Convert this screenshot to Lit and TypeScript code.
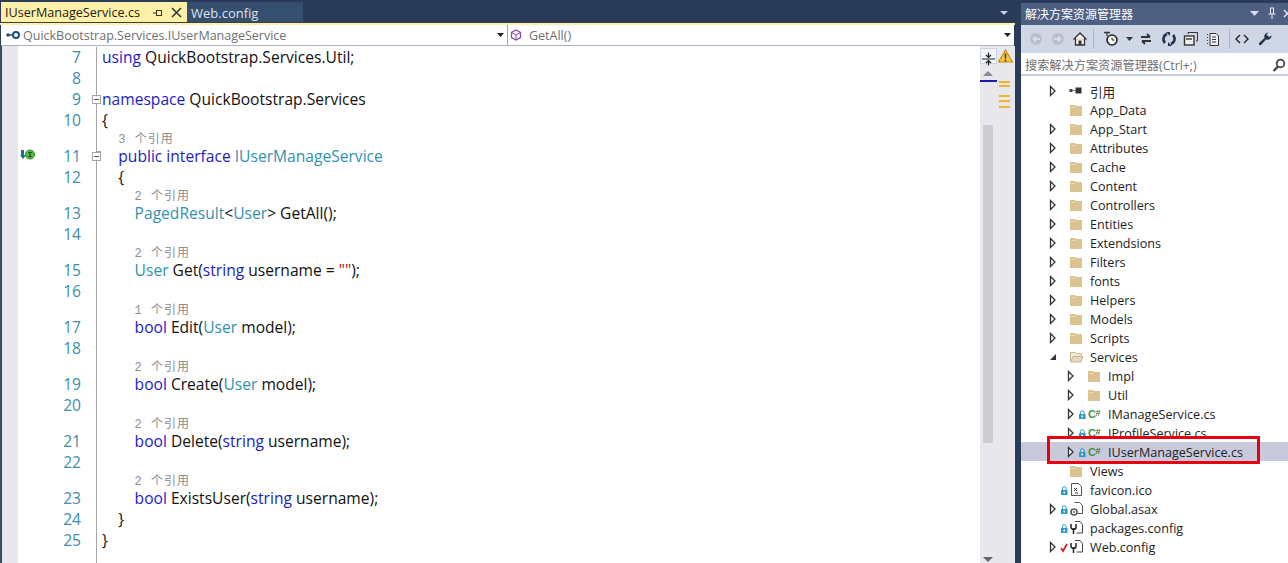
import { LitElement, html, css, svg } from "lit";
import { customElement } from "lit/decorators.js";

type Tok = [string, string?];
const K = "k", T = "t", S = "s";
type Row = { n: number; toks: Tok[]; lens?: string; indent: number; box?: boolean; start?: boolean; tick?: boolean; noLine?: boolean; mark?: boolean };
const rows: Row[] = [
  { n: 7, indent: 0, tick: true, toks: [["using", K], [" QuickBootstrap.Services.Util;"]] },
  { n: 8, indent: 0, noLine: true, toks: [] },
  { n: 9, indent: 0, box: true, start: true, toks: [["namespace", K], [" QuickBootstrap.Services"]] },
  { n: 10, indent: 0, toks: [["{"]] },
  { n: 11, indent: 1, box: true, mark: true, lens: "3 个引用", toks: [["public", K], [" "], ["interface", K], [" "], ["IUserManageService", T]] },
  { n: 12, indent: 1, toks: [["{"]] },
  { n: 13, indent: 2, lens: "2 个引用", toks: [["PagedResult", T], ["<"], ["User", T], ["> GetAll();"]] },
  { n: 14, indent: 0, toks: [] },
  { n: 15, indent: 2, lens: "2 个引用", toks: [["User", T], [" Get("], ["string", K], [" username = "], ['""', S], [");"]] },
  { n: 16, indent: 0, toks: [] },
  { n: 17, indent: 2, lens: "1 个引用", toks: [["bool", K], [" Edit("], ["User", T], [" model);"]] },
  { n: 18, indent: 0, toks: [] },
  { n: 19, indent: 2, lens: "2 个引用", toks: [["bool", K], [" Create("], ["User", T], [" model);"]] },
  { n: 20, indent: 0, toks: [] },
  { n: 21, indent: 2, lens: "2 个引用", toks: [["bool", K], [" Delete("], ["string", K], [" username);"]] },
  { n: 22, indent: 0, toks: [] },
  { n: 23, indent: 2, lens: "2 个引用", toks: [["bool", K], [" ExistsUser("], ["string", K], [" username);"]] },
  { n: 24, indent: 1, tick: true, toks: [["}"]] },
  { n: 25, indent: 0, tick: true, toks: [["}"]] },
];

type Node = { label: string; lv: number; exp?: "c" | "o"; icon: string; state?: string; sel?: boolean };
const F = "folder";
const tree: Node[] = [
  { label: "引用", lv: 0, exp: "c", icon: "ref" },
  { label: "App_Data", lv: 0, icon: F },
  ...["App_Start", "Attributes", "Cache", "Content", "Controllers", "Entities", "Extendsions", "Filters", "fonts", "Helpers", "Models", "Scripts"].map((label) => ({ label, lv: 0, exp: "c" as const, icon: F })),
  { label: "Services", lv: 0, exp: "o", icon: "open" },
  { label: "Impl", lv: 1, exp: "c", icon: F },
  { label: "Util", lv: 1, exp: "c", icon: F },
  { label: "IManageService.cs", lv: 1, exp: "c", icon: "cs", state: "lock" },
  { label: "IProfileService.cs", lv: 1, exp: "c", icon: "cs", state: "lock" },
  { label: "IUserManageService.cs", lv: 1, exp: "c", icon: "cs", state: "lock", sel: true },
  { label: "Views", lv: 0, icon: F },
  { label: "favicon.ico", lv: 0, icon: "ico", state: "lock" },
  { label: "Global.asax", lv: 0, exp: "c", icon: "asax", state: "lock" },
  { label: "packages.config", lv: 0, icon: "cfg", state: "lock" },
  { label: "Web.config", lv: 0, exp: "c", icon: "cfg", state: "check" },
];

const treeIcon = (k: string) => {
  switch (k) {
    case F:
      return svg`<path d="M1 3h5l1 1h6v10H1z" fill="#dcc291"/><path d="M2 5h4v1H2z" fill="#ebdcbf"/>`;
    case "open":
      return svg`<path d="M1.500 13V3.500h5l1 1h5V7" fill="#f4ead8" stroke="#c8b591"/><path d="M1.500 13L4 7.500h10L12 13z" fill="#e6d8bd" stroke="#c8b591"/>`;
    case "ref":
      return svg`<rect x="0.500" y="6" width="3" height="3" fill="#444"/><path d="M3.500 7.500h3" stroke="#777"/><rect x="6.500" y="4.500" width="6" height="6" fill="#333"/>`;
    case "cs":
      return svg`<text x="1" y="11.500" font-family="Liberation Sans, sans-serif" font-size="11" font-weight="700" fill="#3f9150">C</text><text x="8.500" y="9.500" font-family="Liberation Sans, sans-serif" font-size="9" font-weight="700" fill="#2f7d42">#</text>`;
    case "ico":
      return svg`<path d="M2.500 1.500h7l3 3v9h-10z" fill="#fff" stroke="#555"/><path d="M5 6l3 3M8 6l-3 3M6 11h3" stroke="#333"/>`;
    case "asax":
      return svg`<path d="M5.500 1.500h5l3 3v8h-5" fill="#fff" stroke="#555"/><circle cx="5" cy="11" r="3" fill="none" stroke="#555" stroke-width="1.600"/><circle cx="5" cy="11" r="1" fill="#555"/>`;
    default:
      return svg`<path d="M6 1.500h5l2.500 3v8.500h-6" fill="#fff" stroke="#444"/><path d="M2 4v3a2.500 2.500 0 0 0 5 0V4M4.500 8v6" fill="none" stroke="#222" stroke-width="1.500"/>`;
  }
};

@customElement("app-root")
export class AppRoot extends LitElement {
  static styles = css`
    :host { display: block; width: 1288px; height: 563px; overflow: hidden; background: #293b58; font-family: "Open Sans", "Noto Sans CJK SC", sans-serif; }
    .root { display: grid; grid-template-columns: 1015px 6px 267px; height: 563px; }
    .doc { display: flex; flex-direction: column; height: 563px; overflow: hidden; }
    .tabs { height: 23px; display: flex; padding: 2px 0 0 1px; box-sizing: border-box; align-items: stretch; }
    .tab { display: flex; align-items: center; font-size: 13px; box-sizing: border-box; }
    .tab.on { width: 186px; background: #fff0a8; color: #1a1a1a; padding-left: 4px; font-size: 12.6px; }
    .tab.off { width: 116px; background: #364e70; color: #dce3ee; padding-left: 4px; }
    .tname { width: 148px; white-space: nowrap; }
    .close { margin-left: 8px; }
    .tabs .spacer { flex: 1; display: flex; justify-content: flex-end; align-items: center; padding-right: 6px; }
    .wellline { height: 2px; background: #f8f0b4; border-top: 1px solid #3a3f3a; margin-top: -1px; }
    .nav { height: 20px; display: grid; grid-template-columns: 506px 1px 506px; background: #fff; margin: 0 1px; border-bottom: 1px solid #abb3c2; }
    .combo { display: flex; align-items: center; font-size: 12.5px; color: #6f6f6f; padding-left: 3px; white-space: nowrap; }
    .combo.m { padding-left: 2px; }
    .tx { flex: 1; margin-left: 2px; }
    .tx2 { margin-left: 7px; flex: 1; }
    .drop { margin-right: 3px; }
    .sep { background: #9ba3b4; }
    .editor { flex: 1; display: flex; min-height: 0; }
    .edge { width: 2px; background: #3b4a66; flex: none; }
    .glyph { width: 16px; background: #e6e7e8; flex: none; }
    .code { width: 962px; background: #fff; flex: none; overflow: hidden; padding-top: 1px; box-sizing: border-box; }
    .lens, .line { display: grid; grid-template-columns: 63px 8px 13px 1fr; }
    .lens { height: 15px; font-size: 12px; letter-spacing: 1px; line-height: 19px; color: #8c8c8c; font-family: "Liberation Mono", "Noto Sans CJK SC", monospace; }
    .line { height: 21px; line-height: 21px; font-size: 15.6px; color: #111; white-space: pre; position: relative; }
    .num { text-align: right; color: #3c8fab; }
    .out { position: relative; }
    .vl { position: absolute; left: 7px; top: 0; bottom: 0; width: 1px; background: #a5a5a5; }
    .vl.from { top: 6px; }
    .tk { position: absolute; left: 7px; bottom: 0; width: 5px; height: 1px; background: #a5a5a5; }
    .box { position: absolute; left: 3px; top: 6px; width: 7px; height: 7px; border: 1px solid #a5a5a5; background: #fff; }
    .box::after { content: ""; position: absolute; left: 1px; top: 3px; width: 5px; height: 1px; background: #555; }
    .k { color: #1c1cc4; }
    .t { color: #2f93ad; }
    .s { color: #a31515; }
    .bp { position: absolute; left: 1px; top: 3px; }
    .scrollwrap { flex: none; width: 35px; background: #e8e8ec; position: relative; }
    .splitbtn { position: absolute; left: 0; top: 2px; height: 16px; width: 17px; background: #f2f4f9; border: 1px solid #cdd4e4; box-sizing: border-box; }
    .thumb { position: absolute; left: 3px; top: 79px; width: 10px; height: 318px; background: #cdcdd0; }
    .warn { position: absolute; left: 18px; top: 3px; }
    .dash { height: 2px; width: 11px; background: #f0b528; position: absolute; left: 19px; }
    .d1 { top: 35px; } .d2 { top: 39px; } .d3 { top: 49px; } .d4 { top: 54px; } .d5 { top: 60px; }
    .sel-bar { position: absolute; left: 0; top: 34px; width: 17px; height: 2px; background: #1b1bb0; }
    .arrow { position: absolute; left: 3px; width: 0; height: 0; border-left: 5px solid transparent; border-right: 5px solid transparent; }
    .arrow.up { top: 25px; border-bottom: 5px solid #868999; }
    .arrow.down { top: 511px; border-top: 5px solid #666; }

    .se { display: flex; flex-direction: column; height: 560px; margin-top: 3px; background: #fff; overflow: hidden; }
    .se-title { height: 22px; background: #4d6082; color: #fff; font-size: 12px; display: flex; align-items: center; padding: 0 0 2px 4px; box-sizing: border-box; justify-content: space-between; font-family: "Noto Sans CJK SC", sans-serif; overflow: hidden; flex: none; }
    .se-btns { display: flex; gap: 8px; align-items: center; margin-right: -4px; }
    .x { margin-left: -2px; }
    .tb { height: 28px; background: #cfd6e5; display: flex; align-items: center; padding-left: 7px; box-sizing: border-box; flex: none; }
    .tb svg { display: block; flex: none; }
    .m6 { margin-left: 6px; }
    .tsep { width: 1px; height: 20px; background: #aeb6c6; margin: 0 5px; flex: none; }
    .tsep.b { margin: 0 4px 0 8px; }
    .clock { margin-left: 4px; }
    .ddm { margin: 0 5px 0 5px; }
    .m7 { margin-left: 7px; }
    .search { height: 23px; box-sizing: border-box; background: #fff; border-bottom: 2px solid #c6cddc; display: flex; align-items: center; justify-content: space-between; font-size: 12.2px; color: #6f6f6f; padding: 2px 2px 0 4px; flex: none; }
    .tree { flex: 1; padding-top: 5px; overflow: hidden; }
    .node { height: 19px; display: flex; align-items: center; font-size: 12.6px; color: #222; white-space: nowrap; position: relative; }
    .node.sel { background: #c9c9dc; }
    .exp { width: 12px; height: 12px; flex: none; }
    .st { width: 10px; height: 16px; flex: none; }
    .ic { width: 16px; height: 16px; flex: none; margin-right: 5px; }
    .label { padding-top: 2px; }
    .redbox { position: absolute; left: 26px; top: -6px; width: 213px; height: 28px; border: 3px solid #e8000f; box-sizing: border-box; pointer-events: none; }
  `;

  private line(r: Row) {
    const pad = r.indent * 16.3;
    return html`
      ${r.lens ? html`<div class="lens"><span></span><span></span><span class="out"><i class="vl"></i></span><span style="padding-left:${pad}px">${r.lens}</span></div>` : ""}
      <div class="line">
        <span class="num">${r.n}</span>
        <span></span>
        <span class="out">
          ${r.noLine ? "" : html`<i class="vl ${r.start ? "from" : ""}"></i>`}
          ${r.box ? html`<i class="box"></i>` : ""}
          ${r.tick ? html`<i class="tk"></i>` : ""}
        </span>
        <span style="padding-left:${pad}px">${r.toks.map(([t, c]) => (c ? html`<span class=${c}>${t}</span>` : t))}</span>
        ${r.mark
          ? html`<svg class="bp" width="16" height="12" viewBox="0 0 16 12"><path d="M2 1h3v5h2l-3 4-3-4h1z" fill="#1e6e8e"/><circle cx="11" cy="5.500" r="4.500" fill="#57b947" stroke="#2f8a2a"/><path d="M9.500 3.500h3M11 3.500v4M9.500 7.500h3" stroke="#0c3d0c"/></svg>`
          : ""}
      </div>
    `;
  }

  private node(n: Node) {
    const left = 26 + n.lv * 18;
    return html`<div class="node ${n.sel ? "sel" : ""}" style="padding-left:${left}px">
      <svg class="exp" viewBox="0 0 12 12">
        ${n.exp === "c" ? svg`<path d="M3.500 1.500l4.500 4.500-4.500 4.500z" fill="#fff" stroke="#333" stroke-width="1.300"/>` : n.exp === "o" ? svg`<path d="M9 3v6H3z" fill="#333"/>` : ""}
      </svg>
      <svg class="st" viewBox="0 0 10 16">
        ${n.state === "lock"
          ? svg`<path d="M3.500 8V6.500a1.800 1.800 0 0 1 3.600 0V8" fill="none" stroke="#2b9ac4"/><rect x="2" y="8" width="6.500" height="5" fill="#2b9ac4"/><rect x="4.500" y="9.500" width="1.500" height="2" fill="#fff"/>`
          : n.state === "check"
            ? svg`<path d="M2 9l2 3 4-7" fill="none" stroke="#d2202a" stroke-width="1.800"/>`
            : ""}
      </svg>
      <svg class="ic" viewBox="0 0 16 16">${treeIcon(n.icon)}</svg>
      <span class="label">${n.label}</span>
      ${n.sel ? html`<i class="redbox"></i>` : ""}
    </div>`;
  }

  render() {
    return html`<div class="root">
      <div class="doc">
        <div class="tabs">
          <div class="tab on">
            <span class="tname">IUserManageService.cs</span>
            <svg width="10" height="12" viewBox="0 0 10 12"><path d="M0 6h3M3.500 3v6M3.500 3.500h5M3.500 8.500h5M8.500 3v6" fill="none" stroke="#333"/></svg>
            <svg class="close" width="11" height="11" viewBox="0 0 11 11"><path d="M1 1l9 9M10 1l-9 9" stroke="#333" stroke-width="1.500"/></svg>
          </div>
          <div class="tab off">Web.config</div>
          <div class="spacer"><svg width="10" height="6" viewBox="0 0 10 6"><path d="M1 1h8L5 5z" fill="#c6d0e0"/></svg></div>
        </div>
        <div class="wellline"></div>
        <div class="nav">
          <div class="combo">
            <svg width="17" height="10" viewBox="0 0 17 10"><circle cx="4" cy="5" r="1.800" fill="#1c4e80"/><path d="M5 5h4" stroke="#1c4e80" stroke-width="1.500"/><circle cx="12" cy="5" r="3" fill="none" stroke="#1c4e80" stroke-width="2"/></svg>
            <span class="tx">QuickBootstrap.Services.IUserManageService</span>
            <svg class="drop" width="7" height="4" viewBox="0 0 7 4"><path d="M0 0h7L3.500 4z" fill="#222"/></svg>
          </div>
          <div class="sep"></div>
          <div class="combo m">
            <svg width="12" height="12" viewBox="0 0 12 12"><path d="M6 1l4.500 2.500v5L6 11 1.500 8.500v-5z" fill="none" stroke="#8a4bb5" stroke-width="1.300"/><path d="M1.500 3.500L6 6l4.500-2.500M6 6v5" fill="none" stroke="#8a4bb5"/></svg>
            <span class="tx2">GetAll()</span>
            <svg class="drop" width="7" height="4" viewBox="0 0 7 4"><path d="M0 0h7L3.500 4z" fill="#222"/></svg>
          </div>
        </div>
        <div class="editor">
          <div class="edge"></div>
          <div class="glyph"></div>
          <div class="code">${rows.map((r) => this.line(r))}</div>
          <div class="scrollwrap">
            <div class="splitbtn">
              <svg width="15" height="14" viewBox="0 0 15 14"><path d="M1 7h13M7.500 0.500V5M7.500 9v4.500M5 3l2.500 2.500L10 3M5 11l2.500-2.500L10 11" fill="none" stroke="#222" stroke-width="1.200"/></svg>
            </div>
            <svg class="warn" width="15" height="14" viewBox="0 0 15 14"><path d="M7.500 1L14.500 13H.5z" fill="#f7c93e" stroke="#c98a14" stroke-width="1.200"/><path d="M7.500 4.500v5M7.500 10.500v2" stroke="#333" stroke-width="1.500"/></svg>
            <i class="arrow up"></i>
            <i class="sel-bar"></i>
            <i class="thumb"></i>
            <i class="dash d1"></i><i class="dash d2"></i><i class="dash d3"></i><i class="dash d4"></i><i class="dash d5"></i>
            <i class="arrow down"></i>
          </div>
        </div>
      </div>
      <div></div>
      <div class="se">
        <div class="se-title">
          <span>解决方案资源管理器</span>
          <span class="se-btns">
            <svg width="9" height="5" viewBox="0 0 9 5"><path d="M0 0h9L4.500 5z" fill="#d7deea"/></svg>
            <svg width="10" height="12" viewBox="0 0 10 12"><path d="M3 1h4M3.500 1v6M6.500 1v6M1.500 7h7M5 7v5" fill="none" stroke="#e6ebf3"/></svg>
            <svg class="x" width="9" height="9" viewBox="0 0 9 9"><path d="M1 1l7 7M8 1L1 8" stroke="#e6ebf3" stroke-width="1.400"/></svg>
          </span>
        </div>
        <div class="tb">
          <svg width="16" height="16" viewBox="0 0 16 16"><circle cx="8" cy="8" r="6" fill="#b9bfcc"/><path d="M12 8H6M8 5.500L5.500 8 8 10.500" fill="none" stroke="#dfe3ec" stroke-width="1.500"/></svg>
          <svg class="m6" width="16" height="16" viewBox="0 0 16 16"><circle cx="8" cy="8" r="6" fill="#b9bfcc"/><path d="M4 8h6M8 5.500L10.500 8 8 10.500" fill="none" stroke="#dfe3ec" stroke-width="1.500"/></svg>
          <svg class="m6" width="16" height="16" viewBox="0 0 16 16"><path d="M1.500 8.500L8 2l6.500 6.500M3.500 7.500V14h9V7.500" fill="#f3f1ea" stroke="#333" stroke-width="1.300"/><rect x="6.500" y="9.500" width="3" height="4.500" fill="#3a3a3a"/></svg>
          <i class="tsep"></i>
          <svg class="clock" width="18" height="16" viewBox="0 0 18 16"><path d="M1 1.500h6" stroke="#333" stroke-width="1.500"/><path d="M4 1.500V5" stroke="#333" stroke-width="1.200"/><circle cx="9" cy="9" r="5" fill="#fff" stroke="#222" stroke-width="1.600"/><path d="M9 6.500V9h2.500" fill="none" stroke="#222"/></svg>
          <svg class="ddm" width="7" height="4" viewBox="0 0 7 4"><path d="M0 0h7L3.500 4z" fill="#333"/></svg>
          <svg width="16" height="16" viewBox="0 0 16 16"><path d="M3 6h9M9 3l3 3M13 10H4M7 13l-3-3" fill="none" stroke="#333" stroke-width="1.800"/></svg>
          <svg class="m7" width="16" height="16" viewBox="0 0 16 16"><path d="M4 12a5.500 5.500 0 0 1 2-9M12 4a5.500 5.500 0 0 1-2 9" fill="none" stroke="#25344f" stroke-width="2.600"/><path d="M5 1h4v4zM11 15H7v-4z" fill="#25344f"/></svg>
          <svg class="m6" width="16" height="16" viewBox="0 0 16 16"><rect x="1.500" y="5" width="9.500" height="9" fill="#eef0f4" stroke="#333" stroke-width="1.400"/><path d="M3 8h6" stroke="#333" stroke-width="1.400"/><path d="M5 3V1.500h9.500V10H13" fill="none" stroke="#333"/></svg>
          <svg class="m6" width="16" height="16" viewBox="0 0 16 16"><path d="M5 2.500h6l2.500 2.500v9.500H5z" fill="#eef0f4" stroke="#333"/><path d="M7 6h4M7 8.500h4M7 11h4" stroke="#333"/><path d="M2.500 3v1M2.500 6v1M2.500 9v1M2.500 12v1" stroke="#444"/></svg>
          <i class="tsep b"></i>
          <svg width="16" height="16" viewBox="0 0 16 16"><path d="M6 4L2 8l4 4M10 4l4 4-4 4" fill="none" stroke="#222" stroke-width="1.400"/></svg>
          <svg class="m7" width="16" height="16" viewBox="0 0 16 16"><path d="M14.500 4.500a4 4 0 0 1-5.500 4L4 14a1.500 1.500 0 0 1-2-2l5.500-5a4 4 0 0 1 4-5.500L9.500 3.500 12 6z" fill="#25344f"/></svg>
        </div>
        <div class="search">
          <span>搜索解决方案资源管理器(Ctrl+;)</span>
          <svg width="14" height="14" viewBox="0 0 14 14"><circle cx="8.500" cy="5.500" r="3.800" fill="none" stroke="#444" stroke-width="1.800"/><path d="M6 8.500L1.500 13" stroke="#444" stroke-width="2.400"/></svg>
        </div>
        <div class="tree">${tree.map((n) => this.node(n))}</div>
      </div>
    </div>`;
  }
}
